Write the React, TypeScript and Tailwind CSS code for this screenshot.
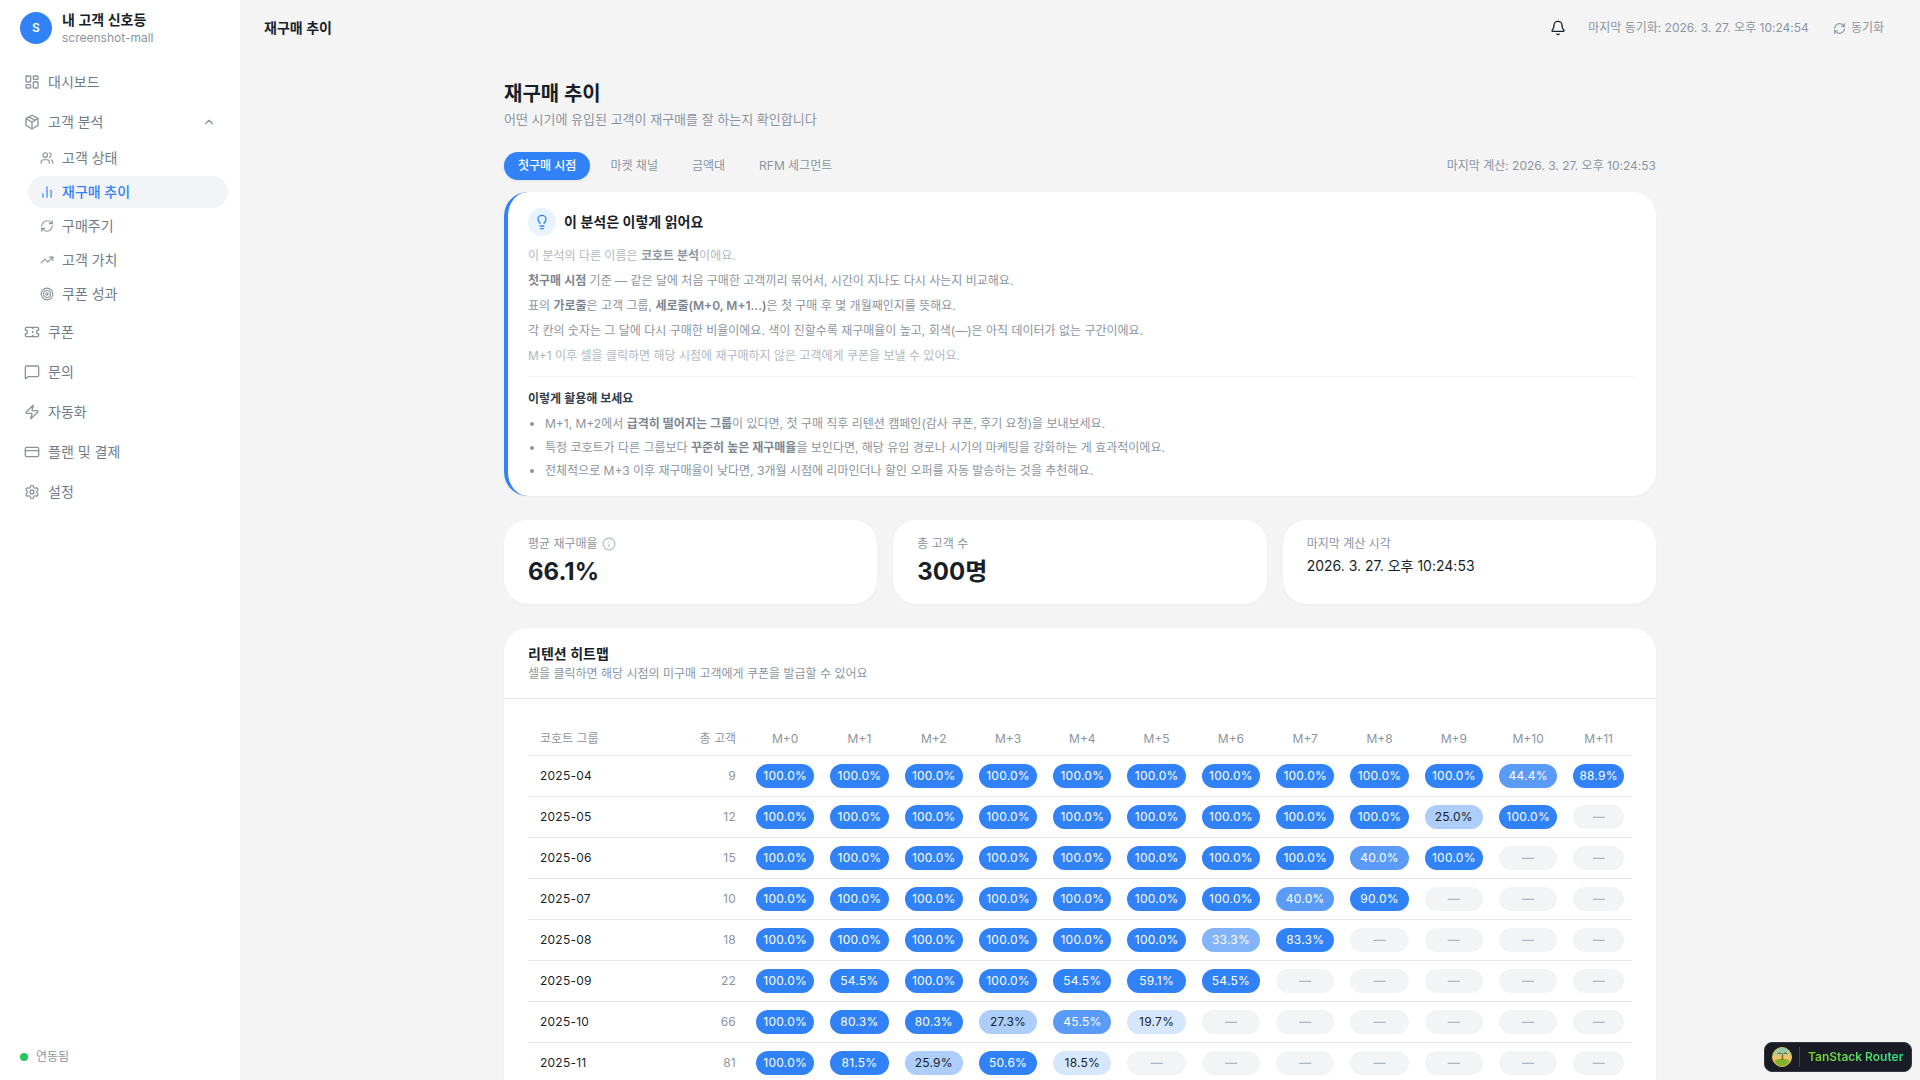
import {
  Bell,
  ChartNoAxesColumn,
  ChevronUp,
  CreditCard,
  Info,
  LayoutDashboard,
  Lightbulb,
  MessageSquare,
  Package,
  RefreshCw,
  Settings,
  Target,
  Ticket,
  TrendingUp,
  Users,
  Zap,
} from "lucide-react";
import type { ReactNode } from "react";

const subItems = [
  { label: "고객 상태", icon: Users },
  { label: "재구매 추이", icon: ChartNoAxesColumn, active: true },
  { label: "구매주기", icon: RefreshCw },
  { label: "고객 가치", icon: TrendingUp },
  { label: "쿠폰 성과", icon: Target },
];

const bottomItems = [
  { label: "쿠폰", icon: Ticket },
  { label: "문의", icon: MessageSquare },
  { label: "자동화", icon: Zap },
  { label: "플랜 및 결제", icon: CreditCard },
  { label: "설정", icon: Settings },
];

const months = ["M+0", "M+1", "M+2", "M+3", "M+4", "M+5", "M+6", "M+7", "M+8", "M+9", "M+10", "M+11"];

const cohorts: { name: string; total: number; values: number[] }[] = [
  { name: "2025-04", total: 9, values: [100, 100, 100, 100, 100, 100, 100, 100, 100, 100, 44.4, 88.9] },
  { name: "2025-05", total: 12, values: [100, 100, 100, 100, 100, 100, 100, 100, 100, 25, 100] },
  { name: "2025-06", total: 15, values: [100, 100, 100, 100, 100, 100, 100, 100, 40, 100] },
  { name: "2025-07", total: 10, values: [100, 100, 100, 100, 100, 100, 100, 40, 90] },
  { name: "2025-08", total: 18, values: [100, 100, 100, 100, 100, 100, 33.3, 83.3] },
  { name: "2025-09", total: 22, values: [100, 54.5, 100, 100, 54.5, 59.1, 54.5] },
  { name: "2025-10", total: 66, values: [100, 80.3, 80.3, 27.3, 45.5, 19.7] },
  { name: "2025-11", total: 81, values: [100, 81.5, 25.9, 50.6, 18.5] },
];

function pillClass(value: number) {
  if (value >= 50) return "bg-[#3182f6] text-white";
  if (value >= 40) return "bg-[#5a9bf8] text-white";
  if (value >= 30) return "bg-[#83b4fa] text-white";
  if (value >= 20) return "bg-[#adcdfb] text-[#191f28]";
  return "bg-[#d6e6fd] text-[#191f28]";
}

function Card({ className = "", children }: { className?: string; children: ReactNode }) {
  return <div className={`rounded-3xl bg-white shadow-[0_1px_3px_rgba(0,0,0,0.04)] ${className}`}>{children}</div>;
}

function Strong({ children }: { children: ReactNode }) {
  return <strong className="font-semibold text-[#7b8692]">{children}</strong>;
}

function RouterLogo() {
  return (
    <svg viewBox="0 0 20 20" className="h-5 w-5">
      <defs>
        <linearGradient id="sky" x1="0" y1="0" x2="0" y2="1">
          <stop offset="0" stopColor="#6fc7c9" />
          <stop offset="0.55" stopColor="#f6c667" />
          <stop offset="1" stopColor="#f08a5d" />
        </linearGradient>
      </defs>
      <circle cx="10" cy="10" r="9.500" fill="url(#sky)" stroke="#d9c65a" />
      <path d="M2.500 14c3-3 12-3 15 0-1.500 3-4.500 5-7.500 5s-6-2-7.500-5z" fill="#7fb52e" />
      <path d="M9.500 13 10 7h1l.3 6z" fill="#8a5a2b" />
      <path d="M10.500 7C8.500 4.500 6 5.500 5 7.500c2-1 3.500-1 5.500-.5zM10.500 7c2-2.500 4.500-1.500 5 .5-1.500-1-3.500-1-5-.5z" fill="#2f7d3b" />
    </svg>
  );
}

function Sidebar() {
  return (
    <aside className="flex h-full w-60 shrink-0 flex-col bg-white">
      <div className="flex h-14 items-center gap-2.5 px-5">
        <div className="flex h-8 w-8 items-center justify-center rounded-full bg-[#3182f6] text-xs font-semibold text-white">S</div>
        <div className="leading-4">
          <p className="text-sm font-semibold text-[#191f28]">내 고객 신호등</p>
          <p className="text-xs text-[#8b95a1]">screenshot-mall</p>
        </div>
      </div>
      <nav className="mt-2 flex flex-col gap-1 px-3 text-sm text-[#717c89]">
        <a className="flex h-9 items-center gap-2 px-3">
          <LayoutDashboard size={16} className="text-[#8b95a1]" />
          대시보드
        </a>
        <div>
          <a className="flex h-9 items-center gap-2 px-3">
            <Package size={16} className="text-[#8b95a1]" />
            고객 분석
            <ChevronUp size={14} className="ml-auto text-[#8b95a1]" />
          </a>
          <div className="mt-0.5 ml-4 flex flex-col gap-0.5">
            {subItems.map((item) => (
              <a
                key={item.label}
                className={`flex h-8 items-center gap-2 rounded-full px-3 ${item.active ? "bg-[#f2f4f6] font-medium text-[#3182f6]" : ""}`}
              >
                <item.icon size={14} className={item.active ? "text-[#3182f6]" : "text-[#8b95a1]"} />
                {item.label}
              </a>
            ))}
          </div>
        </div>
        {bottomItems.map((item) => (
          <a key={item.label} className="flex h-9 items-center gap-2 px-3">
            <item.icon size={16} className="text-[#8b95a1]" />
            {item.label}
          </a>
        ))}
      </nav>
      <div className="mt-auto flex items-center gap-2 px-5 pb-[15px] text-xs text-[#8b95a1]">
        <span className="h-2 w-2 rounded-full bg-[#22c55e]" />
        연동됨
      </div>
    </aside>
  );
}

function Header() {
  return (
    <header className="flex h-14 shrink-0 items-center justify-between px-6">
      <h1 className="text-sm font-semibold text-[#191f28]">재구매 추이</h1>
      <div className="flex items-center text-xs text-[#8b95a1]">
        <Bell size={16} className="text-[#191f28]" />
        <span className="ml-[22px]">마지막 동기화: 2026. 3. 27. 오후 10:24:54</span>
        <button className="ml-3 flex h-8 items-center gap-[5px] px-3">
          <RefreshCw size={13} />
          동기화
        </button>
      </div>
    </header>
  );
}

function GuideCard() {
  return (
    <Card className="border-l-4 border-[#3182f6] pt-4 pr-5 pb-[15px] pl-5">
      <div className="flex items-center gap-2">
        <span className="flex h-7 w-7 items-center justify-center rounded-full bg-[#e8f3ff]">
          <Lightbulb size={16} className="text-[#3182f6]" />
        </span>
        <h3 className="text-sm font-semibold text-[#191f28]">이 분석은 이렇게 읽어요</h3>
      </div>
      <div className="mt-[10px] flex flex-col gap-[5.500px] text-xs leading-[19.500px] text-[#8b95a1]">
        <p className="text-[#b0b8c1]">
          이 분석의 다른 이름은 <strong className="font-semibold text-[#8b95a1]">코호트 분석</strong>이에요.
        </p>
        <p>
          <Strong>첫구매 시점</Strong> 기준 — 같은 달에 처음 구매한 고객끼리 묶어서, 시간이 지나도 다시 사는지 비교해요.
        </p>
        <p>
          표의 <Strong>가로줄</Strong>은 고객 그룹, <Strong>세로줄(M+0, M+1...)</Strong>은 첫 구매 후 몇 개월째인지를 뜻해요.
        </p>
        <p>각 칸의 숫자는 그 달에 다시 구매한 비율이에요. 색이 진할수록 재구매율이 높고, 회색(—)은 아직 데이터가 없는 구간이에요.</p>
        <p className="text-[#b0b8c1]">M+1 이후 셀을 클릭하면 해당 시점에 재구매하지 않은 고객에게 쿠폰을 보낼 수 있어요.</p>
      </div>
      <div className="mt-[10px] border-t border-[#f2f4f6] pt-[12px]">
        <h4 className="text-xs leading-[19.500px] font-semibold text-[#333d4b]">이렇게 활용해 보세요</h4>
        <ul className="mt-[6px] flex flex-col gap-1 text-xs leading-[19.500px] text-[#8b95a1]">
          <li className="ml-[17px] list-disc marker:text-[#8b95a1]">
            M+1, M+2에서 <Strong>급격히 떨어지는 그룹</Strong>이 있다면, 첫 구매 직후 리텐션 캠페인(감사 쿠폰, 후기 요청)을 보내보세요.
          </li>
          <li className="ml-[17px] list-disc marker:text-[#8b95a1]">
            특정 코호트가 다른 그룹보다 <Strong>꾸준히 높은 재구매율</Strong>을 보인다면, 해당 유입 경로나 시기의 마케팅을 강화하는 게 효과적이에요.
          </li>
          <li className="ml-[17px] list-disc marker:text-[#8b95a1]">
            전체적으로 M+3 이후 재구매율이 낮다면, 3개월 시점에 리마인더나 할인 오퍼를 자동 발송하는 것을 추천해요.
          </li>
        </ul>
      </div>
    </Card>
  );
}

function Stats() {
  return (
    <div className="mt-6 grid grid-cols-3 gap-4">
      <Card className="h-[84px] px-6 pt-4">
        <p className="flex items-center gap-1 text-xs leading-4 text-[#8b95a1]">
          평균 재구매율 <Info size={14} className="text-[#b0b8c1]" />
        </p>
        <p className="mt-1 text-2xl leading-8 font-bold text-[#191f28]">66.1%</p>
      </Card>
      <Card className="h-[84px] px-6 pt-4">
        <p className="text-xs leading-4 text-[#8b95a1]">총 고객 수</p>
        <p className="mt-1 text-2xl leading-8 font-bold text-[#191f28]">300명</p>
      </Card>
      <Card className="h-[84px] px-6 pt-4">
        <p className="text-xs leading-4 text-[#8b95a1]">마지막 계산 시각</p>
        <p className="mt-1 text-sm leading-5 text-[#191f28]">2026. 3. 27. 오후 10:24:53</p>
      </Card>
    </div>
  );
}

function Heatmap() {
  return (
    <Card className="mt-6">
      <div className="h-[71px] border-b border-[#e5e8eb] px-6 pt-[17px]">
        <h3 className="text-sm leading-[18px] font-semibold text-[#191f28]">리텐션 히트맵</h3>
        <p className="mt-[3px] text-xs leading-4 text-[#8b95a1]">셀을 클릭하면 해당 시점의 미구매 고객에게 쿠폰을 발급할 수 있어요</p>
      </div>
      <div className="p-6">
        <table className="w-full table-fixed border-collapse text-xs">
          <colgroup>
            <col className="w-[130px]" />
            <col className="w-[90px]" />
            {months.slice(0, 11).map((m) => (
              <col key={m} className="w-[74.300px]" />
            ))}
            <col />
          </colgroup>
          <thead>
            <tr className="h-[33px] border-b border-[#e5e8eb] text-[#8b95a1]">
              <th className="px-3 text-left font-normal">코호트 그룹</th>
              <th className="px-3 text-right font-normal">총 고객</th>
              {months.map((m) => (
                <th key={m} className="font-normal">
                  {m}
                </th>
              ))}
            </tr>
          </thead>
          <tbody>
            {cohorts.map((row) => (
              <tr key={row.name} className="h-[41px] border-b border-[#e5e8eb]">
                <td className="px-3 tracking-[0.02em] text-[#191f28]">{row.name}</td>
                <td className="px-3 text-right tracking-[0.02em] text-[#8b95a1]">{row.total}</td>
                {months.map((m, i) => {
                  const value = row.values[i];
                  return (
                    <td key={m} className="px-2">
                      {value === undefined ? (
                        <div className="flex h-6 items-center justify-center rounded-xl bg-[#f2f4f6] font-semibold text-[#b0b8c1]">—</div>
                      ) : (
                        <div className={`flex h-6 items-center justify-center rounded-xl tracking-[0.02em] ${pillClass(value)}`}>
                          {value.toFixed(1)}%
                        </div>
                      )}
                    </td>
                  );
                })}
              </tr>
            ))}
          </tbody>
        </table>
      </div>
    </Card>
  );
}

export default function App() {
  return (
    <div className="flex h-screen overflow-hidden bg-[#f4f4f5] font-[Inter,'Noto_Sans_CJK_KR',sans-serif]">
      <Sidebar />
      <div className="flex min-w-0 flex-1 flex-col overflow-hidden">
        <Header />
        <main className="min-h-0 flex-1 overflow-hidden">
          <div className="mx-auto w-[1152px] pt-6">
            <h2 className="text-xl leading-7 font-bold text-[#191f28]">재구매 추이</h2>
            <p className="mt-0.5 text-[13px] leading-[18px] text-[#8b95a1]">어떤 시기에 유입된 고객이 재구매를 잘 하는지 확인합니다</p>
            <div className="mt-6 mb-3 flex items-center justify-between">
              <div className="flex gap-1.5 text-xs">
                <button className="h-7 rounded-full bg-[#3182f6] px-3.5 font-medium text-white shadow-[0_1px_3px_rgba(0,0,0,0.08)]">첫구매 시점</button>
                <button className="h-7 px-3.5 text-[#8b95a1]">마켓 채널</button>
                <button className="h-7 px-3.5 text-[#8b95a1]">금액대</button>
                <button className="h-7 px-3.5 text-[#8b95a1]">RFM 세그먼트</button>
              </div>
              <p className="text-xs text-[#8b95a1]">마지막 계산: 2026. 3. 27. 오후 10:24:53</p>
            </div>
            <GuideCard />
            <Stats />
            <Heatmap />
          </div>
        </main>
      </div>
      <div className="fixed right-2 bottom-2 flex h-[30px] w-[148px] items-center rounded-lg border border-[#323743] bg-[#191c24] pl-[7px]">
        <RouterLogo />
        <span className="mr-[8px] ml-[7px] h-5 w-px bg-[#3f4552]" />
        <span className="bg-gradient-to-r from-[#7ed321] to-[#1fe58f] bg-clip-text text-xs font-semibold text-transparent">TanStack Router</span>
      </div>
    </div>
  );
}
